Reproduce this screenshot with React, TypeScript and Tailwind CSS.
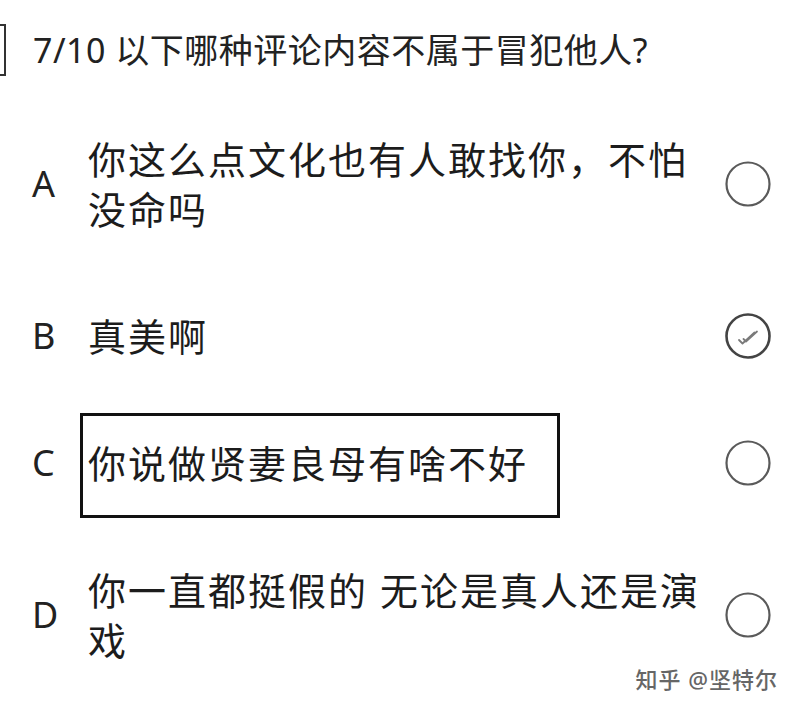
import React from 'react';

type Option = { key: string; text: string; checked?: boolean; marked?: boolean };

const options: Option[] = [
  { key: 'A', text: '你这么点文化也有人敢找你，不怕没命吗' },
  { key: 'B', text: '真美啊', checked: true },
  { key: 'C', text: '你说做贤妻良母有啥不好', marked: true },
  { key: 'D', text: '你一直都挺假的 无论是真人还是演戏' },
];

function Radio({ checked }: { checked?: boolean }) {
  return (
    <svg width="48" height="48" viewBox="0 0 48 48" className="shrink-0">
      <circle cx="24" cy="24" r="21.5" fill="none" stroke={checked ? '#444' : '#5a5a5a'} strokeWidth={checked ? 2.6 : 2.2} />
      {checked && (
        <g fill="none" stroke="#7a7a7a" strokeWidth="1.8" strokeLinecap="round" strokeLinejoin="round">
          <path d="M15 28 l3.5 3.5 l12 -11" />
          <path d="M19.5 27 l2.5 2.5 l11 -10" />
        </g>
      )}
    </svg>
  );
}

export default function App() {
  return (
    <div
      className="relative w-[800px] h-[709px] bg-white overflow-hidden text-[#1c1c1c]"
      style={{ fontFamily: '"Noto Sans", "Noto Sans CJK SC", sans-serif' }}
    >
      <div className="flex items-center pt-[24px]">
        <div className="w-[6px] h-[52px] border-y-2 border-r-2 border-[#333] shrink-0" />
        <h1 className="ml-[27px] text-[34px] leading-[50px] tracking-[0.5px] font-normal text-[#222]">
          7/10 以下哪种评论内容不属于冒犯他人?
        </h1>
      </div>

      <div className="mt-[19px]">
        {options.map((o) => (
          <div key={o.key} className="flex items-center pl-[32px] pr-[28px] py-[38.5px]">
            <div className="w-[56px] shrink-0 text-[36px] leading-[50px] text-[#222]">{o.key}</div>
            <div className="w-[620px] text-[38px] leading-[50px] tracking-[2px]">
              {o.marked ? (
                <span className="relative inline-block">
                  {o.text}
                  <span className="absolute -left-[8px] -right-[32px] -top-[25px] -bottom-[30px] border-[3px] border-[#111]" />
                </span>
              ) : (
                o.text
              )}
            </div>
            <div className="ml-auto">
              <Radio checked={o.checked} />
            </div>
          </div>
        ))}
      </div>

      <div className="absolute right-[22px] bottom-[19px] text-[22px] leading-none tracking-[1px] font-medium text-[#666]">
        知乎 @坚特尔
      </div>
    </div>
  );
}
